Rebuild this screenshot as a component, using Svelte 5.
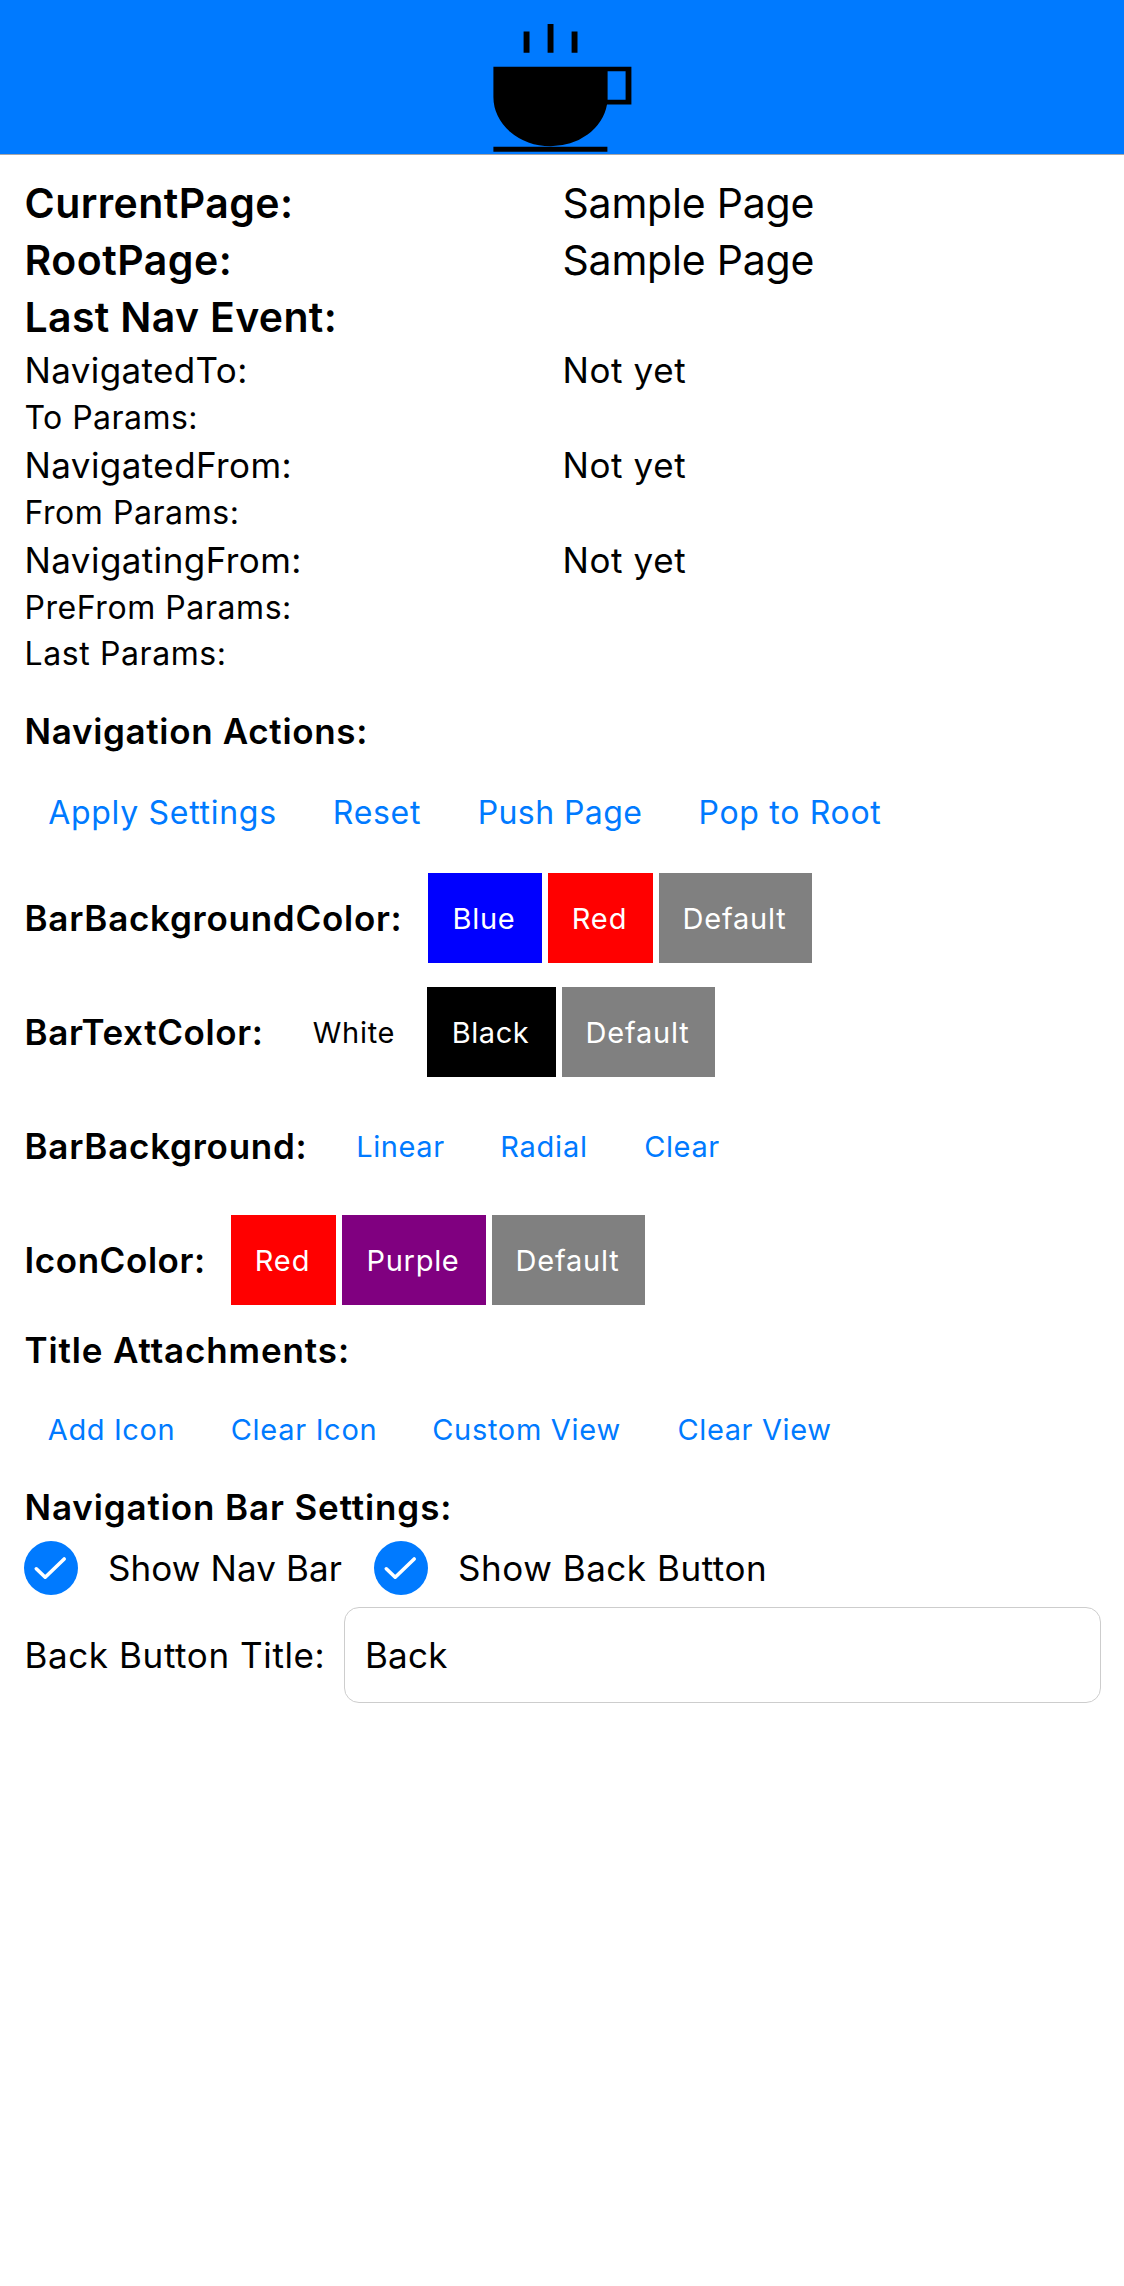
<script>
  // `tracking` is the letter spacing in px, `width` the control's width in px.
  const info = [
    { label: 'CurrentPage:', tracking: 0.42, value: 'Sample Page', size: 'large', valueTracking: -0.21 },
    { label: 'RootPage:', tracking: 0.5, value: 'Sample Page', size: 'large', valueTracking: -0.21 },
    { label: 'Last Nav Event:', tracking: 0.34, size: 'large' },
    { label: 'NavigatedTo:', tracking: 0.37, value: 'Not yet', size: 'medium', valueTracking: 0.6 },
    { label: 'To Params:', tracking: 0.45, size: 'small' },
    { label: 'NavigatedFrom:', tracking: 0.42, value: 'Not yet', size: 'medium', valueTracking: 0.6 },
    { label: 'From Params:', tracking: 0.56, size: 'small' },
    { label: 'NavigatingFrom:', tracking: 0.43, value: 'Not yet', size: 'medium', valueTracking: 0.6 },
    { label: 'PreFrom Params:', tracking: 0.57, size: 'small' },
    { label: 'Last Params:', tracking: 0.6, size: 'small' }
  ];

  const actions = [
    { text: 'Apply Settings', width: 279, tracking: 0.7 },
    { text: 'Reset', width: 138, tracking: 0.7 },
    { text: 'Push Page', width: 216, tracking: 0.42 },
    { text: 'Pop to Root', width: 232, tracking: 0.7 }
  ];

  const options = [
    {
      label: 'BarBackgroundColor:', width: 404, tracking: 0.74,
      buttons: [
        { text: 'Blue', kind: 'blue', width: 114, tracking: 0.7 },
        { text: 'Red', kind: 'red', width: 105, tracking: 0.9 },
        { text: 'Default', kind: 'gray', width: 153, tracking: 0.78 }
      ]
    },
    {
      label: 'BarTextColor:', width: 265, tracking: 0.63,
      buttons: [
        { text: 'White', kind: 'white', width: 132, tracking: 0.7 },
        { text: 'Black', kind: 'black', width: 129, tracking: 0.55 },
        { text: 'Default', kind: 'gray', width: 153, tracking: 0.78 }
      ]
    },
    {
      label: 'BarBackground:', width: 308, tracking: 0.75,
      buttons: [
        { text: 'Linear', kind: 'link', width: 137, tracking: 0.6 },
        { text: 'Radial', kind: 'link', width: 138, tracking: 0.8 },
        { text: 'Clear', kind: 'link', width: 126, tracking: 0.6 }
      ]
    },
    {
      label: 'IconColor:', width: 207, tracking: 0.58,
      buttons: [
        { text: 'Red', kind: 'red', width: 105, tracking: 0.9 },
        { text: 'Purple', kind: 'purple', width: 144, tracking: 0.7 },
        { text: 'Default', kind: 'gray', width: 153, tracking: 0.78 }
      ]
    }
  ];

  const attachments = [
    { text: 'Add Icon', width: 175, tracking: 0.6 },
    { text: 'Clear Icon', width: 198, tracking: 0.7 },
    { text: 'Custom View', width: 235, tracking: 0.7 },
    { text: 'Clear View', width: 209, tracking: 0.61 }
  ];

  const toggles = [
    { text: 'Show Nav Bar', width: 350, tracking: 0.1 },
    { text: 'Show Back Button', width: 400, tracking: 0.54 }
  ];

  let backTitle = 'Back';
</script>

<header class="bar">
  <svg class="cup" width="139" height="128" viewBox="493 24 139 128" aria-label="Coffee">
    <path d="M523.6 31.5h5.9v21.2h-5.9zM547.6 24h5.9v28.7h-5.9zM571.6 31.5h5.9v21.2h-5.9z" />
    <path d="M493.4 66.8h138v37.6H607A56.8 49.3 0 0 1 550.2 146.3A56.8 49.3 0 0 1 493.4 97zM607.6 71.3V99.8h18V71.3z" fill-rule="evenodd" />
    <path d="M493.4 146.7H607.4v5H493.4z" />
  </svg>
</header>

<main>
  <section class="info">
    {#each info as row}
      <div class="info-row {row.size}">
        <span class="key" style:letter-spacing="{row.tracking}px">{row.label}</span>
        {#if row.value}
          <span style:letter-spacing="{row.valueTracking}px">{row.value}</span>
        {/if}
      </div>
    {/each}
  </section>

  <h2 class="actions-title">Navigation Actions:</h2>
  <div class="row actions">
    {#each actions as b}
      <button class="link" style:width="{b.width}px" style:letter-spacing="{b.tracking}px">{b.text}</button>
    {/each}
  </div>

  <section class="options">
    {#each options as o}
      <div class="option">
        <span class="name" style:width="{o.width}px" style:letter-spacing="{o.tracking}px">{o.label}</span>
        <div class="row">
          {#each o.buttons as b}
            <button class={b.kind} style:width="{b.width}px" style:letter-spacing="{b.tracking}px">{b.text}</button>
          {/each}
        </div>
      </div>
    {/each}
  </section>

  <h2 class="attach-title">Title Attachments:</h2>
  <div class="row attachments">
    {#each attachments as b}
      <button class="link" style:width="{b.width}px" style:letter-spacing="{b.tracking}px">{b.text}</button>
    {/each}
  </div>

  <h2 class="settings-title">Navigation Bar Settings:</h2>
  <div class="toggles">
    {#each toggles as t}
      <div class="toggle" style:width="{t.width}px">
        <svg width="54" height="54" viewBox="0 0 54 54">
          <circle cx="27" cy="27" r="27" fill="#007aff" />
          <path d="M12.3 27.8L21.2 36.2L40.2 18" fill="none" stroke="#fff" stroke-width="3.6" stroke-linecap="round" stroke-linejoin="round" />
        </svg>
        <span style:letter-spacing="{t.tracking}px">{t.text}</span>
      </div>
    {/each}
  </div>
  <div class="field">
    <label for="back-title">Back Button Title:</label>
    <input id="back-title" type="text" bind:value={backTitle} />
  </div>
</main>

<style>
  :global(body) {
    background: #fff;
  }
  .bar {
    box-sizing: border-box;
    height: 155px;
    padding: 24px 0 0 493px;
    background: #007aff;
    border-bottom: 1px solid #a6a6aa;
  }
  .cup {
    display: block;
  }
  main {
    padding: 20px 23px 0 24px;
    font-family: Inter, 'Liberation Sans', sans-serif;
    font-size: 35px;
    color: #000;
  }
  .info-row {
    display: grid;
    grid-template-columns: 538.5px 1fr;
    white-space: nowrap;
  }
  .key,
  .name,
  h2,
  .field label {
    text-indent: 0.5px;
  }
  .large {
    font-size: 41px;
    line-height: 57px;
  }
  .large .key {
    font-weight: 600;
  }
  .medium {
    line-height: 49px;
  }
  .small {
    font-size: 32px;
    line-height: 46px;
  }
  h2 {
    margin: 0;
    font-size: 35px;
    font-weight: 600;
    white-space: nowrap;
  }
  .actions-title {
    margin-top: 23px;
    line-height: 62px;
    letter-spacing: 0.67px;
  }
  .attach-title {
    line-height: 90px;
    letter-spacing: 0.87px;
  }
  .settings-title {
    margin-top: 10px;
    line-height: 68px;
    letter-spacing: 0.88px;
  }
  .row {
    display: flex;
    gap: 6px;
  }
  button {
    box-sizing: border-box;
    height: 90px;
    padding: 2px 2px 0 0;
    border: 0;
    background: transparent;
    color: #fff;
    font: 400 29px/88px Inter, 'Liberation Sans', sans-serif;
    white-space: nowrap;
  }
  .link {
    padding-right: 0;
    color: #007aff;
  }
  .blue {
    background: #00f;
  }
  .red {
    background: #f00;
  }
  .gray {
    background: #808080;
  }
  .white {
    background: #fff;
    color: #000;
  }
  .black {
    background: #000;
  }
  .purple {
    background: #800080;
  }
  .actions {
    margin-bottom: 12px;
  }
  .actions button {
    height: 99px;
    padding-right: 2px;
    font-size: 32px;
    line-height: 97px;
  }
  .attachments button {
    height: 68px;
    line-height: 66px;
  }
  .options {
    display: flex;
    flex-direction: column;
    gap: 24px;
  }
  .option {
    display: flex;
    align-items: center;
    height: 90px;
  }
  .name {
    flex: none;
    font-weight: 600;
    line-height: 90px;
  }
  .toggles {
    display: flex;
  }
  .toggle {
    display: flex;
    align-items: center;
    gap: 30px;
    height: 54px;
    line-height: 54px;
    white-space: nowrap;
  }
  .field {
    display: flex;
    align-items: center;
    margin-top: 12px;
  }
  .field label {
    width: 320px;
    flex: none;
    letter-spacing: 0.6px;
    white-space: nowrap;
  }
  input {
    box-sizing: border-box;
    flex: 1;
    min-width: 0;
    height: 96px;
    padding: 0 20px;
    border: 1px solid #cdcdcd;
    border-radius: 15px;
    background: #fff;
    color: #000;
    font: 400 35px Inter, 'Liberation Sans', sans-serif;
    letter-spacing: 0.2px;
    outline: none;
  }
</style>
